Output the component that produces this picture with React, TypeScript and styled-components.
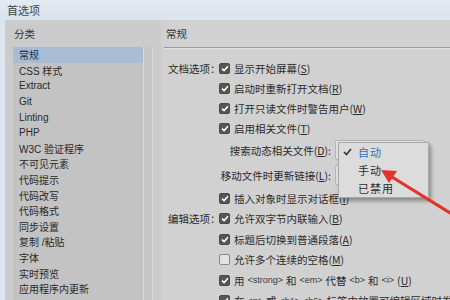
import React from "react";
import styled, { createGlobalStyle } from "styled-components";

const Global = createGlobalStyle`
  html, body { margin: 0; padding: 0; }
  body {
    width: 450px; height: 300px; overflow: hidden;
    font-family: "Liberation Sans", "Noto Sans CJK SC", sans-serif;
    background: #dce5ef;
  }
`;

const Window = styled.div`
  position: relative;
  width: 450px;
  height: 300px;
  display: flex;
  flex-direction: column;
  overflow: hidden;
  background: #dce5ef;
`;

const TitleBar = styled.div`
  height: 19px;
  flex: none;
  display: flex;
  align-items: center;
  padding-left: 7px;
  font-size: 11px;
  color: #444;
  background: linear-gradient(#e3eaf2, #d8e2ed);
`;

const Body = styled.div`
  flex: 1;
  min-height: 0;
  display: flex;
  margin-left: 5px;
  border-top: 1px solid #e6e6e6;
  background: #cdcdcd;
  overflow: hidden;
`;

const LeftPane = styled.div`
  width: 158px;
  flex: none;
  display: flex;
  flex-direction: column;
  padding-left: 8px;
  box-sizing: border-box;
  background: #cbcbcb;
`;

const PaneTitle = styled.div<{ $indent?: number }>`
  height: 27px;
  flex: none;
  display: flex;
  align-items: center;
  padding-left: ${(p) => p.$indent ?? 1}px;
  font-size: 10.5px;
  color: #333;
  font-family: "Noto Sans CJK SC", sans-serif;
`;

const ListBox = styled.div`
  display: flex;
  width: 140px;
  flex: 1;
  min-height: 0;
`;

const List = styled.div`
  width: 130px;
  background: #c3c3c3;
  display: flex;
  flex-direction: column;
  overflow: hidden;
`;

const ListItem = styled.div<{ $selected?: boolean }>`
  height: 15.6px;
  flex: none;
  display: flex;
  align-items: center;
  padding-left: 6px;
  font-size: 10px;
  color: #2a2a2a;
  background: ${(p) => (p.$selected ? "#a8bdd5" : "transparent")};
  white-space: nowrap;
`;

const Scrollbar = styled.div`
  width: 10px;
  box-sizing: border-box;
  border-left: 1px solid #dadada;
  border-right: 1px solid #dadada;
  background: #c6c6c6;
`;

const RightPane = styled.div`
  flex: 1;
  min-width: 0;
  display: flex;
  flex-direction: column;
  background: #d1d1d1;
  padding-left: 2px;
  margin-left: -2px;
  overflow: hidden;
`;

const Divider = styled.div`
  height: 1px;
  flex: none;
  background: #9a9a9a;
  border-bottom: 1px solid #e2e2e2;
  margin-left: 1px;
  margin-bottom: 9px;
`;

const Rows = styled.div`
  display: flex;
  flex-direction: column;
  font-family: "Noto Sans CJK SC", sans-serif;
  font-size: 10.5px;
  color: #2b2b2b;
`;

const Row = styled.div<{ $h?: number }>`
  height: ${(p) => p.$h ?? 20}px;
  flex: none;
  display: flex;
  align-items: center;
  white-space: nowrap;
`;

const GroupLabel = styled.div`
  width: 54px;
  flex: none;
  text-align: left;
  padding-left: 5px;
  box-sizing: border-box;
  margin-right: 2px;
`;

const Box = styled.span<{ $checked?: boolean }>`
  width: 11px;
  height: 11px;
  flex: none;
  box-sizing: border-box;
  border-radius: 2px;
  margin-right: 4px;
  display: inline-flex;
  align-items: center;
  justify-content: center;
  background: ${(p) => (p.$checked ? "#565656" : "#e3e3e3")};
  border: 1px solid ${(p) => (p.$checked ? "#4a4a4a" : "#8a8a8a")};
`;

const SelectLabel = styled.div<{ $w: number }>`
  width: ${(p) => p.$w}px;
  flex: none;
  text-align: right;
  margin-right: 4px;
`;

const SelectWrap = styled.div`
  position: relative;
  width: 90px;
  height: 20px;
  box-sizing: border-box;
  background: #e4e4e4;
  border: 1px solid #b5b5b5;
  border-radius: 2px;
`;

const Popup = styled.div`
  position: absolute;
  left: 2px;
  top: 1px;
  width: 89px;
  background: #dcdcdc;
  border: 1px solid #a9a9a9;
  box-shadow: 2px 3px 4px rgba(0, 0, 0, 0.35);
  display: flex;
  flex-direction: column;
  z-index: 2;
`;

const PopupItem = styled.div<{ $active?: boolean }>`
  height: 18px;
  display: flex;
  align-items: center;
  padding-left: 19px;
  position: relative;
  font-size: 11px;
  letter-spacing: 1px;
  color: ${(p) => (p.$active ? "#2f72c4" : "#2b2b2b")};
`;

const Tick = styled.svg`
  position: absolute;
  left: 4px;
  top: 5px;
`;

const Tag = styled.span`
  font-family: "Liberation Sans", sans-serif;
  font-size: 9px;
  color: #3a3a3a;
  margin: 0 3px;
`;

const Arrow = styled.svg`
  position: absolute;
  left: 0;
  top: 0;
  pointer-events: none;
  z-index: 5;
`;

const Check = () => (
  <svg width="8" height="7" viewBox="0 0 8 7">
    <path d="M1 3.6 L3.1 5.6 L7 1.2" fill="none" stroke="#fff" strokeWidth="1.5" />
  </svg>
);

const CB = ({ on }: { on?: boolean }) => <Box $checked={on}>{on ? <Check /> : null}</Box>;

const Key = ({ k }: { k: string }) => (
  <span>
    (<u>{k}</u>)
  </span>
);

const categories = [
  "常规",
  "CSS 样式",
  "Extract",
  "Git",
  "Linting",
  "PHP",
  "W3C 验证程序",
  "不可见元素",
  "代码提示",
  "代码改写",
  "代码格式",
  "同步设置",
  "复制 /粘贴",
  "字体",
  "实时预览",
  "应用程序内更新",
];

export default function App() {
  return (
    <Window>
      <Global />
      <TitleBar>首选项</TitleBar>
      <Body>
        <LeftPane>
          <PaneTitle>分类</PaneTitle>
          <ListBox>
            <List>
              {categories.map((c, i) => (
                <ListItem key={c} $selected={i === 0}>
                  {c}
                </ListItem>
              ))}
            </List>
            <Scrollbar />
          </ListBox>
        </LeftPane>
        <RightPane>
          <PaneTitle $indent={3}>常规</PaneTitle>
          <Divider />
          <Rows>
            <Row>
              <GroupLabel>文档选项：</GroupLabel>
              <CB on />
              显示开始屏幕<Key k="S" />
            </Row>
            <Row>
              <GroupLabel />
              <CB on />
              启动时重新打开文档<Key k="R" />
            </Row>
            <Row>
              <GroupLabel />
              <CB on />
              打开只读文件时警告用户<Key k="W" />
            </Row>
            <Row>
              <GroupLabel />
              <CB on />
              启用相关文件<Key k="T" />
            </Row>
            <Row $h={24}>
              <SelectLabel $w={168}>
                搜索动态相关文件<Key k="D" />:
              </SelectLabel>
              <SelectWrap>
                <Popup>
                  <PopupItem $active>
                    <Tick width="9" height="8" viewBox="0 0 9 8">
                      <path d="M1 4 L3.5 6.5 L8 1" fill="none" stroke="#333" strokeWidth="1.6" />
                    </Tick>
                    自动
                  </PopupItem>
                  <PopupItem>手动</PopupItem>
                  <PopupItem>已禁用</PopupItem>
                </Popup>
              </SelectWrap>
            </Row>
            <Row $h={26}>
              <SelectLabel $w={168}>
                移动文件时更新链接<Key k="L" />:
              </SelectLabel>
              <SelectWrap />
            </Row>
            <Row $h={20.5}>
              <GroupLabel />
              <CB on />
              插入对象时显示对话框<Key k="I" />
            </Row>
            <Row $h={20.5}>
              <GroupLabel>编辑选项：</GroupLabel>
              <CB on />
              允许双字节内联输入<Key k="B" />
            </Row>
            <Row $h={20.5}>
              <GroupLabel />
              <CB on />
              标题后切换到普通段落<Key k="A" />
            </Row>
            <Row $h={20.5}>
              <GroupLabel />
              <CB />
              允许多个连续的空格<Key k="M" />
            </Row>
            <Row $h={20.5}>
              <GroupLabel />
              <CB on />用<Tag>&lt;strong&gt;</Tag>和<Tag>&lt;em&gt;</Tag>代替<Tag>&lt;b&gt;</Tag>和
              <Tag>&lt;i&gt;</Tag>
              <Key k="U" />
            </Row>
            <Row $h={20.5}>
              <GroupLabel />
              <CB on />在<Tag>&lt;p&gt;</Tag>或<Tag>&lt;h1&gt;-&lt;h6&gt;</Tag>标签中放置可编辑区域时发出警告
            </Row>
          </Rows>
        </RightPane>
      </Body>
      <Arrow width="450" height="300" viewBox="0 0 450 300">
        <line x1="452" y1="214" x2="392" y2="177" stroke="#e3342c" strokeWidth="3.2" strokeLinecap="round" />
        <polygon points="381,170 397,171 389,183" fill="#e3342c" />
      </Arrow>
    </Window>
  );
}
